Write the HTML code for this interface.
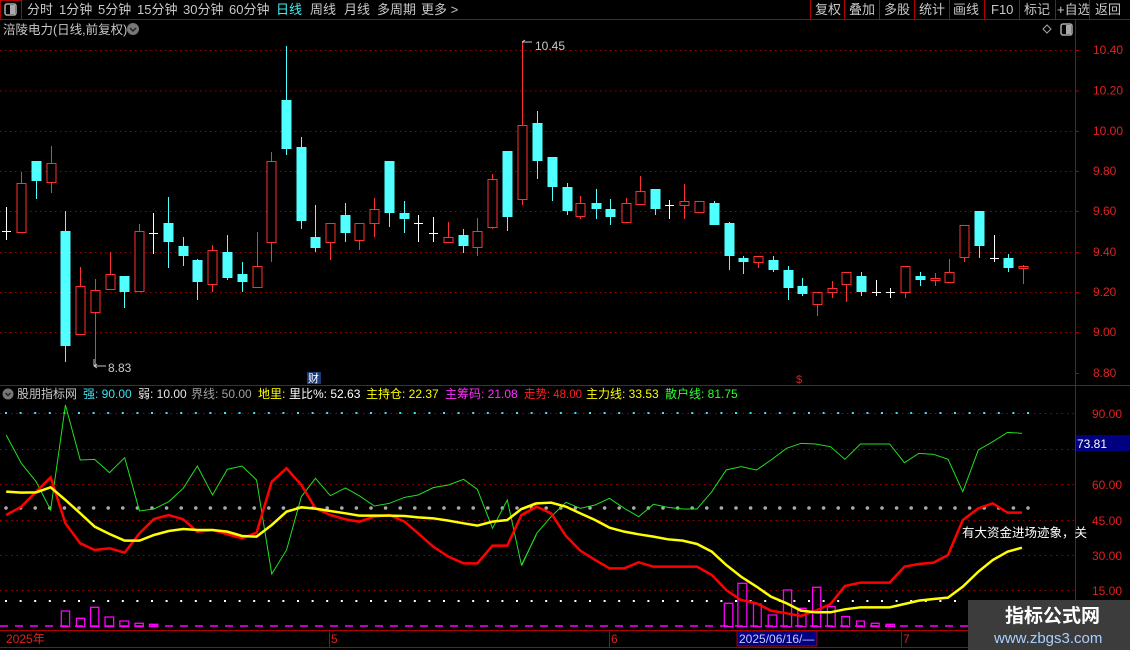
<!DOCTYPE html>
<html><head><meta charset="utf-8"><style>
body{margin:0;background:#000;width:1130px;height:650px;overflow:hidden;font-family:"Liberation Sans","Noto Sans CJK SC",sans-serif;}
svg{position:absolute;left:0;top:0}
text{font-family:"Liberation Sans","Noto Sans CJK SC",sans-serif}
</style></head><body>
<svg id="s" width="1130" height="650" xmlns="http://www.w3.org/2000/svg">
<rect width="1130" height="650" fill="#000"/>
<line x1="0" y1="19.5" x2="1130" y2="19.5" stroke="#b00000"/>
<rect x="0.5" y="0.5" width="21" height="19" fill="none" stroke="#b00000"/>
<rect x="5" y="4" width="11" height="11" rx="2" fill="none" stroke="#aaa" stroke-width="1.5"/><rect x="10" y="5" width="5" height="9" fill="#aaa"/>
<g font-size="13" fill="#c8c8c8">
<text x="27" y="14">分时</text><text x="59" y="14">1分钟</text><text x="98" y="14">5分钟</text><text x="137" y="14">15分钟</text><text x="183" y="14">30分钟</text><text x="229" y="14">60分钟</text>
<text x="276" y="14" fill="#40f0f0">日线</text><text x="310" y="14">周线</text><text x="344" y="14">月线</text><text x="377" y="14">多周期</text><text x="421" y="14">更多 &gt;</text>
<text x="815" y="14">复权</text><text x="849" y="14">叠加</text><text x="884" y="14">多股</text><text x="919" y="14">统计</text><text x="953" y="14">画线</text><text x="991" y="14">F10</text><text x="1024" y="14">标记</text><text x="1057" y="14">+自选</text><text x="1095" y="14">返回</text>
</g>
<g stroke="#b00000"><line x1="810.5" y1="0" x2="810.5" y2="19"/><line x1="844.5" y1="0" x2="844.5" y2="19"/><line x1="879.5" y1="0" x2="879.5" y2="19"/><line x1="914.5" y1="0" x2="914.5" y2="19"/><line x1="949.5" y1="0" x2="949.5" y2="19"/><line x1="984.5" y1="0" x2="984.5" y2="19"/><line x1="1019.5" y1="0" x2="1019.5" y2="19"/><line x1="1055.5" y1="0" x2="1055.5" y2="19"/><line x1="1089.5" y1="0" x2="1089.5" y2="19"/>
<line x1="1075.5" y1="19" x2="1075.5" y2="630"/></g>
<text x="3" y="34" font-size="12.5" fill="#c8c8c8">涪陵电力(日线,前复权)</text>
<circle cx="133" cy="29" r="6" fill="#777"/><path d="M130 28l3 3 3-3" stroke="#222" stroke-width="1.5" fill="none"/>
<path d="M1047 25l4 4-4 4-4-4z" fill="none" stroke="#aaa"/>
<rect x="1061" y="24" width="11" height="11" rx="2" fill="none" stroke="#aaa" stroke-width="1.5"/><rect x="1066" y="25" width="5" height="9" fill="#aaa"/>
<g id="grid" stroke="#a00000" stroke-dasharray="1.5,3.5"></g>
<g font-size="12" fill="#e02020" id="plab"></g>
<g id="candles"></g>
<g fill="#c8c8c8" font-size="12"><text x="108" y="372">8.83</text><text x="535" y="50">10.45</text></g>
<path d="M94 366h12M94 366l3-2M94 366l3 2M94 359v7" stroke="#c8c8c8" fill="none"/>
<path d="M522 42h10M522 42l3-2" stroke="#c8c8c8" fill="none"/>
<rect x="307" y="372" width="14" height="12" fill="#1a3a7a"/><text x="308" y="382" font-size="11" fill="#fff">财</text>
<text x="796" y="383" font-size="11" fill="#e02020">$</text>
<line x1="0" y1="385.5" x2="1130" y2="385.5" stroke="#b00000"/>
<circle cx="8" cy="394" r="5.5" fill="#777"/><path d="M5.5 393l2.5 2.5 2.5-2.5" stroke="#222" stroke-width="1.4" fill="none"/>
<g font-size="12">
<text x="17" y="398" fill="#c8c8c8">股朋指标网</text>
<text x="83" y="398" fill="#40e0f0">强: 90.00</text>
<text x="138" y="398" fill="#e8e8e8">弱: 10.00</text>
<text x="191" y="398" fill="#a0a0a0">界线: 50.00</text>
<text x="258" y="398" fill="#ffff00">地里:</text>
<text x="289" y="398" fill="#ffffff">里比%: 52.63</text>
<text x="366" y="398" fill="#ffff00">主持仓: 22.37</text>
<text x="445" y="398" fill="#ff30ff">主筹码: 21.08</text>
<text x="524" y="398" fill="#ff2020" textLength="58" lengthAdjust="spacingAndGlyphs">走势: 48.00</text>
<text x="586" y="398" fill="#ffff00">主力线: 33.53</text>
<text x="665" y="398" fill="#30ff30">散户线: 81.75</text>
</g>
<g id="igrid" stroke="#a00000" stroke-dasharray="1.5,4"></g>
<g id="dots"></g>
<g font-size="12" fill="#e02020"><text x="1092" y="418">90.00</text><text x="1092" y="489">60.00</text><text x="1092" y="525">45.00</text><text x="1092" y="560">30.00</text><text x="1092" y="595">15.00</text></g>
<rect x="1076" y="435" width="54" height="16" fill="#000080"/><text x="1077" y="448" font-size="12" fill="#fff">73.81</text>
<g transform="translate(0,400) scale(0.3444,0.3333)" fill="none">
<g stroke="#ff00ff" stroke-width="1.3">
<rect x="178" y="633" width="24" height="47" vector-effect="non-scaling-stroke"/><rect x="222" y="655" width="24" height="25" vector-effect="non-scaling-stroke"/><rect x="263" y="622" width="24" height="58" vector-effect="non-scaling-stroke"/><rect x="305" y="651" width="25" height="29" vector-effect="non-scaling-stroke"/><rect x="348" y="663" width="26" height="17" vector-effect="non-scaling-stroke"/><rect x="392" y="670" width="24" height="10" vector-effect="non-scaling-stroke"/><rect x="434" y="673" width="24" height="7" vector-effect="non-scaling-stroke"/>
</g>
<polyline vector-effect="non-scaling-stroke" stroke="#20e020" stroke-width="1" points="18,105 62,190 105,245 147,330 190,15 233,180 275,178 318,218 362,173 405,333 447,327 490,305 532,265 573,198 617,285 660,208 703,198 745,240 789,522 832,450 875,290 916,235 959,287 1003,264 1043,287 1087,318 1131,310 1175,292 1214,285 1258,263 1302,255 1346,238 1386,268 1430,385 1473,300 1514,495 1557,405"/>
<polyline vector-effect="non-scaling-stroke" stroke="#ff0000" stroke-width="2.5" points="18,345 62,320 105,275 147,232 190,370 233,430 275,450 318,445 362,458 405,400 447,357 490,345 532,358 573,395 617,390 660,403 703,415 745,398 789,245 832,205 875,255 916,325 959,345 1003,358 1043,365 1087,350 1131,345 1175,365 1214,400 1258,440 1302,470 1346,490 1386,490 1430,437 1473,437 1514,345 1557,320"/>
<polyline vector-effect="non-scaling-stroke" stroke="#ffff00" stroke-width="2.5" points="18,275 62,278 105,277 147,262 190,300 233,340 275,380 318,402 362,422 405,422 447,405 490,393 532,387 573,390 617,390 660,395 703,408 745,410 789,375 832,335 875,322 916,326 959,333 1003,340 1043,347 1087,347 1131,347 1175,348 1214,352 1258,355 1302,362 1346,370 1386,377 1430,365 1473,360 1514,327 1557,310"/>
</g>
<g transform="translate(520,400) scale(0.3891,0.3333)" fill="none">
<g stroke="#ff00ff" stroke-width="1.3">
<rect vector-effect="non-scaling-stroke" x="525" y="610" width="22" height="70"/><rect vector-effect="non-scaling-stroke" x="560" y="550" width="23" height="130"/><rect vector-effect="non-scaling-stroke" x="600" y="612" width="20" height="68"/><rect vector-effect="non-scaling-stroke" x="638" y="645" width="22" height="35"/><rect vector-effect="non-scaling-stroke" x="677" y="570" width="21" height="110"/><rect vector-effect="non-scaling-stroke" x="714" y="625" width="21" height="55"/><rect vector-effect="non-scaling-stroke" x="752" y="562" width="21" height="118"/><rect vector-effect="non-scaling-stroke" x="790" y="620" width="20" height="60"/><rect vector-effect="non-scaling-stroke" x="827" y="650" width="20" height="30"/><rect vector-effect="non-scaling-stroke" x="865" y="663" width="20" height="17"/><rect vector-effect="non-scaling-stroke" x="903" y="670" width="20" height="10"/><rect vector-effect="non-scaling-stroke" x="941" y="673" width="21" height="7"/>
</g>
<polyline vector-effect="non-scaling-stroke" stroke="#20e020" stroke-width="1" points="5,495 43,400 80,350 118,307 155,325 193,315 230,295 268,325 305,350 343,313 380,322 418,327 455,327 493,275 530,210 568,200 608,210 645,180 685,145 722,130 760,132 798,140 835,178 875,132 913,132 950,132 988,188 1025,160 1063,163 1100,178 1138,275 1178,150 1215,125 1253,97 1290,100"/>
<polyline vector-effect="non-scaling-stroke" stroke="#ff0000" stroke-width="2.5" points="5,345 43,320 80,340 118,408 155,452 193,480 230,505 268,505 305,487 343,500 380,500 418,500 455,500 493,525 530,570 568,600 608,610 645,632 685,640 722,648 760,632 798,612 835,558 875,548 913,548 950,548 988,500 1025,492 1063,488 1100,465 1138,360 1178,325 1215,310 1253,338 1290,338"/>
<polyline vector-effect="non-scaling-stroke" stroke="#ffff00" stroke-width="2.5" points="5,327 43,310 80,308 118,320 155,340 193,360 230,383 268,395 305,403 343,410 380,418 418,422 455,432 493,455 530,495 568,530 608,560 645,590 685,610 722,632 760,637 798,637 835,628 875,622 913,622 950,622 988,612 1025,602 1063,597 1100,593 1138,560 1178,515 1215,480 1253,455 1290,443"/>
</g>
<line x1="0" y1="626" x2="1075" y2="626" stroke="#ff00ff" stroke-width="1.5" stroke-dasharray="8,7"/>
<text x="962" y="537" font-size="12.5" fill="#fff">有大资金进场迹象，关</text>
<line x1="0" y1="630.5" x2="1130" y2="630.5" stroke="#b00000"/>
<line x1="0" y1="647.5" x2="1130" y2="647.5" stroke="#b00000"/>
<g font-size="12" fill="#e02020"><text x="6" y="643">2025年</text><text x="331" y="643">5</text><text x="611" y="643">6</text><text x="903" y="643">7</text></g>
<g stroke="#b00000"><line x1="329.5" y1="630" x2="329.5" y2="647"/><line x1="609.5" y1="630" x2="609.5" y2="647"/><line x1="901.5" y1="630" x2="901.5" y2="647"/></g>
<rect x="737" y="631" width="80" height="15" fill="#000080" stroke="#b00000"/><text x="739" y="643" font-size="12" fill="#c8c8ff">2025/06/16/—</text>
<rect x="968" y="600" width="162" height="50" fill="#3c3c3c"/>
<text x="1005" y="622" font-size="19" font-weight="bold" fill="#fff">指标公式网</text>
<text x="994" y="643" font-size="15" fill="#a8d0ff">www.zbgs3.com</text>
</svg>
<script>
var NS="http://www.w3.org/2000/svg";
function el(p,t,a){var e=document.createElementNS(NS,t);for(var k in a)e.setAttribute(k,a[k]);p.appendChild(e);return e;}
var g=document.getElementById('grid'),pl=document.getElementById('plab');
var ys=[50,90.5,131,171,211,252,292,332,373],lb=['10.40','10.20','10.00','9.80','9.60','9.40','9.20','9.00','8.80'];
for(var i=0;i<9;i++){if(i<8)el(g,'line',{x1:0,x2:1075,y1:ys[i]+.5,y2:ys[i]+.5});var t=el(pl,'text',{x:1093,y:ys[i]+4});t.textContent=lb[i];el(document.getElementById('s'),'line',{x1:1075,x2:1079,y1:ys[i]+.5,y2:ys[i]+.5,stroke:'#b00000'});}
var ig=document.getElementById('igrid');
[413,449,484,520,555,590].forEach(function(y){el(ig,'line',{x1:0,x2:1075,y1:y+.5,y2:y+.5});});
var d=document.getElementById('dots');
for(var x=6;x<1030;x+=14.6){el(d,'rect',{x:x-1,y:412,width:2,height:2,fill:'#40e0f0'});el(d,'circle',{cx:x,cy:508,r:1.8,fill:'#aaa'});el(d,'rect',{x:x-1,y:600,width:2,height:2,fill:'#fff'});}
var C=[[6,'w',231,231,207,240],[21,'r',183,232,172,232],[35.5,'c',161,181,161,199],[50.5,'r',163,182,146,193],[65,'c',231,346,211,362],[80,'r',286,334,267,334],[94.5,'r',290,312,279,366],[109.5,'r',274,289,252,289],[124,'c',276,292,276,308],[139,'r',231,291,224,291],[153,'w',233,233,213,254],[168,'c',223,242,197,268],[183,'c',246,256,237,266],[197,'c',260,282,259,300],[212,'r',250,284,245,292],[227,'c',252,278,235,280],[242,'c',274,282,262,292],[256.5,'r',266,287,232,287],[271,'r',161,242,152,262],[286,'c',100,149,46,155],[301,'c',147,221,137,229],[315,'c',237,248,205,252],[330,'r',223,242,223,260],[345,'c',215,233,203,242],[359,'r',223,240,223,250],[374,'r',209,223,198,237],[389,'c',161,213,161,227],[404,'c',213,219,201,233],[418,'w',223,223,215,242],[433,'w',233,233,217,242],[448,'r',237,242,222,242],[463,'c',235,246,229,253],[477,'r',231,247,218,256],[492,'r',179,227,174,229],[507,'c',151,217,151,231],
[521.5,'r',125,199,42,205],[536.7,'c',123,161,111,179],[551.5,'c',157,187,157,201],[566.7,'c',187,211,183,215],[580.4,'r',203,216,196,219],[595.6,'c',203,209,189,219],[610.4,'c',209,217,199,225],[625.6,'r',203,222,198,222],[639.6,'r',191,204,176,204],[654.8,'c',189,209,189,215],[669.3,'w',205,205,200,219],[683.7,'r',201,205,184,219],[698.9,'r',201,212,201,212],[713.7,'c',203,225,201,225],[728.5,'c',223,256,222,270],[742.6,'c',258,262,256,274],[757.8,'r',256,262,256,268],[773,'c',260,270,256,272],[787.8,'c',270,288,266,300],[801.9,'c',286,294,278,296],[816.7,'r',292,304,292,316],[831.9,'r',288,292,281,298],[845.9,'r',272,284,272,302],[860.7,'c',276,292,272,296],[875.5,'w',292,292,280,296],[890.4,'w',292,292,288,298],[904.8,'r',266,292,266,298],[920,'c',276,280,272,286],[934.8,'r',278,280,273,286],[948.9,'r',272,282,259,282],[964,'r',225,257,225,262],[978.9,'c',211,246,211,258],[993.7,'w',258,258,235,262],[1008.1,'c',258,268,254,272],[1023,'r',266,268,265,284]];
var cg=document.getElementById('candles');
C.forEach(function(c){var x=Math.round(c[0]),col=c[1]=='r'?'#ff3030':c[1]=='c'?'#50ffff':'#ffffff';
el(cg,'line',{x1:x+.5,x2:x+.5,y1:c[4],y2:c[5],stroke:col});
if(c[1]=='w'){el(cg,'line',{x1:x-4,x2:x+5,y1:c[2]+.5,y2:c[2]+.5,stroke:col});}
else if(c[1]=='c'){el(cg,'rect',{x:x-4.5,y:c[2],width:10,height:Math.max(c[3]-c[2],1.5),fill:col});}
else{el(cg,'rect',{x:x-4,y:c[2]+.5,width:9,height:Math.max(c[3]-c[2],1.5),fill:'#000',stroke:col});}});
</script>
</body></html>
